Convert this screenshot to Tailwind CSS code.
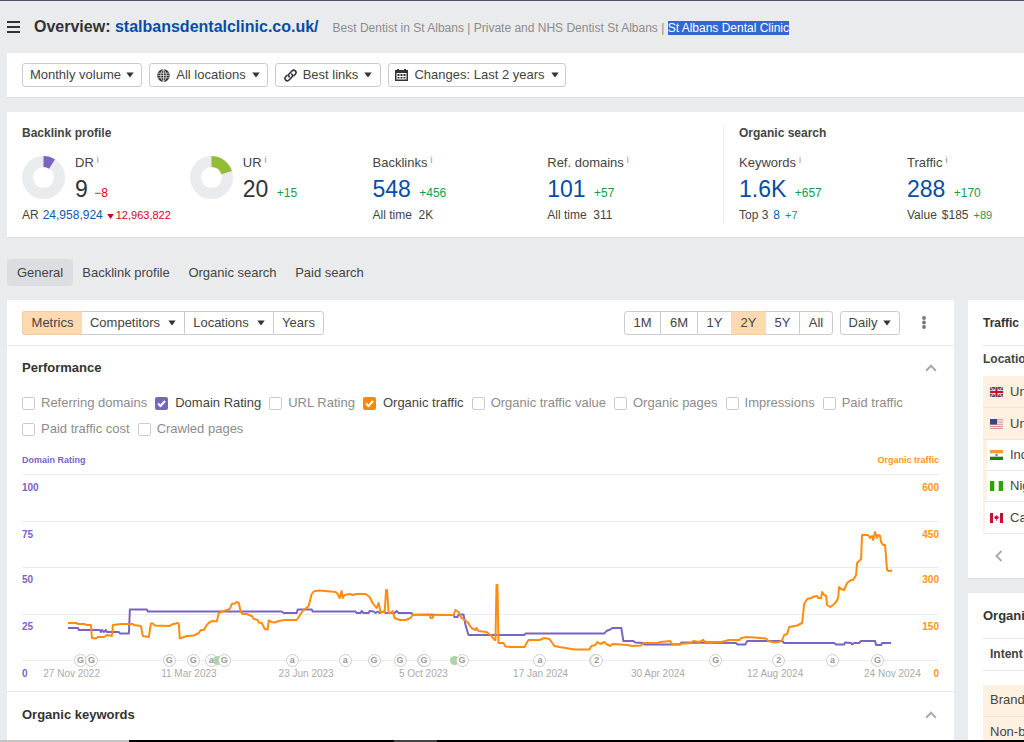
<!DOCTYPE html>
<html lang="en">
<head>
<meta charset="utf-8">
<meta name="viewport" content="width=device-width, initial-scale=1">
<title>Overview: stalbansdentalclinic.co.uk/</title>
<script src="https://cdn.jsdelivr.net/npm/@tailwindcss/browser@4"></script>
</head>
<body class="bg-[#eaebed] font-['Liberation_Sans',Arial,sans-serif] text-[13px] leading-5 text-[#444]">
<svg class="hidden">
  <symbol id="caret" viewBox="0 0 8 6"><path d="M0.300 0.500h7.400L4 5.500z" fill="#333"/></symbol>
  <symbol id="up" viewBox="0 0 12 8"><path d="M1.200 6.800 6 1.800l4.800 5" fill="none" stroke="#aaa" stroke-width="2"/></symbol>
</svg>
<div class="flex h-screen flex-col overflow-hidden border-t border-[#4b5273]">
  <header class="flex h-[52px] shrink-0 items-center pl-[7px] whitespace-nowrap">
    <button aria-label="Menu" class="mr-[14px]"><svg class="h-3 w-[13px]" viewBox="0 0 13 12"><path d="M0 1h13M0 6h13M0 11h13" stroke="#333" stroke-width="2"/></svg></button>
    <h1 class="text-base font-bold text-[#333]">Overview: <a href="#" class="text-[#054da7]">stalbansdentalclinic.co.uk/</a></h1>
    <p class="ml-[14px] pt-0.5 text-xs text-[#8c8c8c]">Best Dentist in St Albans | Private and NHS Dentist St Albans | <span class="bg-[#3367d1] text-white">St Albans Dental Clinic</span></p>
  </header>

  <section class="ml-[7px] flex h-[45px] shrink-0 items-center gap-[7px] border-b border-[#dedfe1] bg-white pl-[15px] whitespace-nowrap">
    <button class="flex h-6 w-[120px] items-center justify-center gap-[5px] rounded-[3px] border border-[#ccc]">Monthly volume<svg class="h-1.5 w-2"><use href="#caret"/></svg></button>
    <button class="flex h-6 w-[119px] items-center justify-center gap-1.5 rounded-[3px] border border-[#ccc]"><svg class="size-[13px]" viewBox="0 0 14 14"><circle cx="7" cy="7" r="6.800" fill="#333"/><path d="M0.800 4.500h12.400M0.800 9.500h12.400M7 .5v13M.5 7h13M7 .5C3 3 3 11 7 13.500M7 .5c4 2.500 4 10.500 0 13" fill="none" stroke="#fff" stroke-width=".7"/></svg>All locations<svg class="h-1.5 w-2"><use href="#caret"/></svg></button>
    <button class="flex h-6 w-[106px] items-center justify-center gap-1.5 rounded-[3px] border border-[#ccc]"><svg class="size-[13px]" viewBox="0 0 14 14" fill="none" stroke="#333" stroke-width="1.700" stroke-linecap="round"><path d="M5.700 8.600a2.500 2.500 0 0 1 0-3.500L8.600 2.100a2.500 2.500 0 0 1 3.600 3.500L10.700 7.100"/><path d="M8.300 5.400a2.500 2.500 0 0 1 0 3.500L5.400 11.900a2.500 2.500 0 0 1-3.600-3.500L3.300 6.900"/></svg>Best links<svg class="h-1.5 w-2"><use href="#caret"/></svg></button>
    <button class="flex h-6 w-[178px] items-center justify-center gap-1.5 rounded-[3px] border border-[#ccc]"><svg class="h-3 w-[13px]" viewBox="0 0 13 12"><path d="M0 1h2V0h2v1h5V0h2v1h2v11H0z" fill="#333"/><path d="M1.500 4h10v6.500h-10z" fill="#fff"/><path d="M2.500 5h2v2h-2zm3 0h2v2h-2zm3 0h2v2h-2zm-6 3h2v1.500h-2zm3 0h2v1.500h-2zm3 0h2v1.500h-2z" fill="#333"/></svg>Changes: Last 2 years<svg class="h-1.5 w-2"><use href="#caret"/></svg></button>
  </section>

  <section class="mt-3.5 ml-[7px] grid shrink-0 grid-cols-[702fr_300fr] border-b border-[#dedfe1] bg-white pt-3.5 pb-3.5 pl-[15px] whitespace-nowrap text-[13px]">
    <div class="border-r border-[#ececec]">
      <h2 class="pb-[13px] text-xs leading-[14px] font-bold">Backlink profile</h2>
      <div class="grid grid-cols-[168fr_183fr_175fr_176fr]">
        <div>
          <div class="flex h-[52px] gap-[10px]">
            <svg class="mt-[3px] size-[43px]" viewBox="-21.500 -21.500 43 43"><circle r="16" fill="none" stroke="#eaebed" stroke-width="11"/><path d="M0-21.500A21.500 21.500 0 0 1 11.500-18.160L5.600-8.860A10.500 10.500 0 0 0 0-10.500z" fill="#7865c3"/></svg>
            <div><div class="leading-5">DR<sup class="ml-[3px] text-[9px] text-[#888]">i</sup></div><div class="text-[23px] leading-8 text-[#333]">9 <span class="text-xs text-[#d0021b]">−8</span></div></div>
          </div>
          <div class="flex items-center pt-0.5 text-xs leading-4">AR<a href="#" class="ml-1 text-[#0f57ad]">24,958,924</a><svg class="mt-0.5 mr-0.5 ml-1 h-[5px] w-[7px]" viewBox="0 0 8 6"><path d="M0 0h8L4 6z" fill="#d0021b"/></svg><span class="text-[11px] text-[#d0021b]">12,963,822</span></div>
        </div>
        <div class="flex h-[52px] gap-[10px]">
          <svg class="mt-[3px] size-[43px]" viewBox="-21.500 -21.500 43 43"><circle r="16" fill="none" stroke="#eaebed" stroke-width="11"/><path d="M0-21.500A21.500 21.500 0 0 1 20.400-6.600L10-3.200A10.500 10.500 0 0 0 0-10.500z" fill="#90bd35"/></svg>
          <div><div class="leading-5">UR<sup class="ml-[3px] text-[9px] text-[#888]">i</sup></div><div class="text-[23px] leading-8 text-[#333]">20 <span class="ml-0.5 text-xs text-[#199a50]">+15</span></div></div>
        </div>
        <div><div>Backlinks<sup class="ml-[3px] text-[9px] text-[#888]">i</sup></div><div class="text-[23px] leading-8"><a href="#" class="text-[#054da7]">548</a> <span class="ml-0.5 text-xs text-[#199a50]">+456</span></div><div class="pt-0.5 text-xs leading-4">All time&nbsp; 2K</div></div>
        <div><div>Ref. domains<sup class="ml-[3px] text-[9px] text-[#888]">i</sup></div><div class="text-[23px] leading-8"><a href="#" class="text-[#054da7]">101</a> <span class="ml-0.5 text-xs text-[#199a50]">+57</span></div><div class="pt-0.5 text-xs leading-4">All time&nbsp; 311</div></div>
      </div>
    </div>
    <div class="pl-[15px]">
      <h2 class="pb-[13px] text-xs leading-[14px] font-bold">Organic search</h2>
      <div class="grid grid-cols-[168fr_117fr]">
        <div><div>Keywords<sup class="ml-[3px] text-[9px] text-[#888]">i</sup></div><div class="text-[23px] leading-8"><a href="#" class="text-[#054da7]">1.6K</a> <span class="ml-0.5 text-xs text-[#199a50]">+657</span></div><div class="flex gap-[5px] pt-0.5 text-xs leading-4"><span>Top 3</span><a href="#" class="text-[#0f57ad]">8</a><span class="text-[11px] text-[#199a50]">+7</span></div></div>
        <div><div>Traffic<sup class="ml-[3px] text-[9px] text-[#888]">i</sup></div><div class="text-[23px] leading-8"><a href="#" class="text-[#054da7]">288</a> <span class="ml-0.5 text-xs text-[#199a50]">+170</span></div><div class="flex gap-[5px] pt-0.5 text-xs leading-4"><span>Value</span><span>$185</span><span class="text-[11px] text-[#199a50]">+89</span></div></div>
      </div>
    </div>
  </section>

  <nav class="mt-[21px] ml-[7px] flex shrink-0 whitespace-nowrap">
    <a href="#" class="flex h-[27px] w-[66px] items-center justify-center rounded-sm bg-[#dcdde0]">General</a>
    <a href="#" class="flex h-[27px] w-[106px] items-center justify-center">Backlink profile</a>
    <a href="#" class="flex h-[27px] w-[107px] items-center justify-center">Organic search</a>
    <a href="#" class="flex h-[27px] w-[87px] items-center justify-center">Paid search</a>
  </nav>

  <div class="mt-3.5 flex min-h-0 flex-1 gap-3.5 overflow-hidden pl-[7px]">
    <main class="min-w-0 flex-1 bg-white">
      <div class="flex h-[46px] items-center border-b border-[#e8e8e8] pr-[22px] pl-[15px] whitespace-nowrap">
        <div class="flex h-6 rounded-[3px] border border-[#ccc]">
          <button class="-my-px -ml-px w-[60px] rounded-l-[3px] border border-r-0 border-[#f3cda4] bg-[#ffd9b0]">Metrics</button>
          <button class="flex w-[102px] items-center justify-center gap-2">Competitors<svg class="h-1.5 w-2"><use href="#caret"/></svg></button>
          <button class="flex w-[89px] items-center justify-center gap-2 border-l border-[#ccc]">Locations<svg class="h-1.5 w-2"><use href="#caret"/></svg></button>
          <button class="w-[50px] border-l border-[#ccc]">Years</button>
        </div>
        <div class="ml-auto flex h-6 rounded-[3px] border border-[#ccc]">
          <button class="w-[35px]">1M</button>
          <button class="w-[37px] border-l border-[#ccc]">6M</button>
          <button class="w-[34px] border-l border-[#ccc]">1Y</button>
          <button class="-my-px w-[35px] border-y border-[#f3cda4] bg-[#ffd9b0]">2Y</button>
          <button class="w-[33px]">5Y</button>
          <button class="w-[33px] border-l border-[#ccc]">All</button>
        </div>
        <button class="ml-[7px] flex h-6 w-[60px] items-center justify-center gap-1.5 rounded-[3px] border border-[#ccc]">Daily<svg class="h-1.5 w-2"><use href="#caret"/></svg></button>
        <button aria-label="More" class="ml-[19px]"><svg class="h-[13px] w-[13px]" viewBox="0 0 13 13" fill="#777"><circle cx="5" cy="2" r="1.900"/><circle cx="5" cy="6.500" r="1.900"/><circle cx="5" cy="11" r="1.900"/></svg></button>
      </div>

      <section class="border-b border-[#e8e8e8] px-[15px] pt-3">
        <div class="flex h-5 items-center justify-between"><h2 class="font-bold text-[#333]">Performance</h2><button aria-label="Collapse performance" class="mr-0.5"><svg class="h-2 w-3"><use href="#up"/></svg></button></div>
        <div class="mt-[15px] flex flex-wrap gap-x-2 gap-y-1.5 whitespace-nowrap text-[#8c8c8c]">
          <label class="flex items-center gap-1.5"><input type="checkbox" class="size-[13px] appearance-none rounded-[2px] border border-[#ccc]">Referring domains</label>
          <label class="flex items-center gap-[7px] text-[#444]"><span class="relative flex"><input type="checkbox" checked class="size-[13px] appearance-none rounded-[2px] bg-[#7865c3]"><svg class="pointer-events-none absolute inset-0 size-[13px]" viewBox="0 0 13 13"><path d="m3 6.500 2.500 2.500L10 4" fill="none" stroke="#fff" stroke-width="2"/></svg></span>Domain Rating</label>
          <label class="flex items-center gap-1.5"><input type="checkbox" class="size-[13px] appearance-none rounded-[2px] border border-[#ccc]">URL Rating</label>
          <label class="flex items-center gap-[7px] text-[#444]"><span class="relative flex"><input type="checkbox" checked class="size-[13px] appearance-none rounded-[2px] bg-[#ff8800]"><svg class="pointer-events-none absolute inset-0 size-[13px]" viewBox="0 0 13 13"><path d="m3 6.500 2.500 2.500L10 4" fill="none" stroke="#fff" stroke-width="2"/></svg></span>Organic traffic</label>
          <label class="flex items-center gap-1.5"><input type="checkbox" class="size-[13px] appearance-none rounded-[2px] border border-[#ccc]">Organic traffic value</label>
          <label class="flex items-center gap-1.5"><input type="checkbox" class="size-[13px] appearance-none rounded-[2px] border border-[#ccc]">Organic pages</label>
          <label class="flex items-center gap-1.5"><input type="checkbox" class="size-[13px] appearance-none rounded-[2px] border border-[#ccc]">Impressions</label>
          <label class="flex items-center gap-1.5"><input type="checkbox" class="size-[13px] appearance-none rounded-[2px] border border-[#ccc]">Paid traffic</label>
          <label class="flex items-center gap-1.5"><input type="checkbox" class="size-[13px] appearance-none rounded-[2px] border border-[#ccc]">Paid traffic cost</label>
          <label class="flex items-center gap-1.5"><input type="checkbox" class="size-[13px] appearance-none rounded-[2px] border border-[#ccc]">Crawled pages</label>
        </div>

        <div class="mt-3 flex h-[18px] items-center justify-between text-[9px] font-bold"><span class="text-[#7865c3]">Domain Rating</span><span class="text-[#ff9420]">Organic traffic</span></div>
        <div class="relative mt-[5px]">
          <div class="grid h-[186px] grid-rows-4 text-[10px] leading-3 font-bold text-[#ff9420]">
            <div class="flex justify-between border-t border-[#ececec] pt-[7px]"><span class="text-[#7865c3]">100</span><span>600</span></div>
            <div class="flex justify-between border-t border-[#ececec] pt-[7px]"><span class="text-[#7865c3]">75</span><span>450</span></div>
            <div class="flex justify-between border-t border-[#ececec] pt-1.5"><span class="text-[#7865c3]">50</span><span>300</span></div>
            <div class="flex justify-between border-t border-[#ececec] pt-1.5"><span class="text-[#7865c3]">25</span><span>150</span></div>
          </div>
          <div class="grid h-[31px] border-t border-[#ececec] pt-[7px] text-[10px] leading-3">
            <div class="col-start-1 row-start-1 flex justify-between font-bold text-[#ff9420]"><span class="text-[#7865c3]">0</span><span>0</span></div>
            <div class="col-start-1 row-start-1 -mr-3 -ml-[9px] grid grid-cols-8 text-center whitespace-nowrap text-[#aaa]"><span>27 Nov 2022</span><span>11 Mar 2023</span><span>23 Jun 2023</span><span>5 Oct 2023</span><span>17 Jan 2024</span><span>30 Apr 2024</span><span>12 Aug 2024</span><span>24 Nov 2024</span></div>
          </div>
          <svg class="absolute top-0 left-0 h-[186px] w-full" viewBox="22 474 918 186" preserveAspectRatio="none" fill="none" stroke-width="2" stroke-linejoin="round">
            <polyline stroke="#7865c3" points="68,628 78,628 79,630 100,630 101,632 102,630 104,632 106,630 107,632 119,632 120,633.500 129,633.500 130,609.500 147,609.500 148,611.500 282,611.500 284,613 297,613 298,609.500 312,609.500 313,611.500 356,611.500 357,613 361,613 362,611 364,613 369,613 370,611 374,611.500 376,613 378,611.500 380,613 384,611.500 386,613 395,613 397,611 399,613 412,613 413,614.500 454,615 455,617 458,617 459,614.500 464,614.500 466,625 469,635 525,635 526,633.500 605,633.500 607,631 611,629.500 613,628 622,628 624,641 634,641 636,642.500 644,643 645,644.500 681,644.500 682,642.500 737,643 738,644.500 746,644.500 748,641 783,641 785,643 835,643 837,644.500 845,644.500 846,642.500 852,643 853,644.500 855,643 860,643 862,641 876,641 877,645 882,645 883,643 892,643"/>
            <polyline stroke="#ff8c0f" points="68,623 77,623 78,624 85,624 86,625 91,625 92,638 96,638.500 98,637 104,637 107,635 112,636 113,625 117,624.500 122,624 133,624 134,625 141,626 143,636 149,637 151,623.500 153,623.500 155,625.500 170,626 172,624.500 178,623 179,624 180,638.500 187,636 194,635.500 199,633 201,630 204,630 207,625 210,622 213,621 217,621.500 219,613 224,611 230,609 232,604 235,603.500 237,602 239,603 241,612 243,614 247,614 252,616 254,619 258,620 259,622.500 262,623 265,629 268,629.500 269,620.500 272,622 275,622.500 279,621 285,620 297,620 299,617 303,611 309,606 312,594 314,591.500 319,590.500 326,591 331,591.500 336,592 338,594 340,598 342,591 343,598 345,595 350,594 353,595 357,594 366,594 370,597 373,603 377,608 379,603 381,612 385,612 386.500,590 387.500,590 389,613 391,613 393,611 395,618 400,620 406,620 411,618 413,615 430,614.500 431,618 433,618 434,615 454,615 456,610 459,612 462,618 468,622 472,628 476,630 477,628 479,631 487,632 491,635 495,640 496,640 497,585 498,585 499,643 504,643 506,646.500 512,647 525,647 529,640 540,640 545,638 550,639 555,646 560,647 566,648 575,649.500 590,649.500 592,646 596,645 598,642 601,644 605,642 607,644 611,646 613,644 628,645 633,646 642,645.500 644,643 659,643 661,642 671,641 673,644.500 692,643 694,641 700,642 704,640 706,642 722,642 730,640 740,640 742,638 748,637 767,638.500 769,641 775,642.500 780,642 783,640 785,635 788,634 790,627 798,625.500 803,623 805,604 808,599 812,598 815,596.500 818,596 819,598 822,598 823,592 825,595 827,596 828,605 831,607 834,605 837,602 839,598 840,587 842,589 845,590 848,583 852,580 854,580 857,575 858,563 862,559 863,535 869,535 871,538 873,536 874,540 876,532 878,538 879,535 881,536 882,542 884,545 886,545 888,570 890,571 893,570.500"/>
          </svg>
          <div id="events"></div>
        </div>
      </section>

      <section class="flex h-[46px] items-center justify-between pr-[17px] pl-[15px]"><h2 class="font-bold text-[#333]">Organic keywords</h2><button aria-label="Collapse organic keywords"><svg class="h-2 w-3"><use href="#up"/></svg></button></section>
    </main>

    <aside class="w-14 shrink-0 overflow-hidden whitespace-nowrap">
      <section class="h-[279px] overflow-hidden border-b border-[#dedfe1] bg-white pl-[15px]">
        <h2 class="flex h-[46px] items-center border-b border-[#e8e8e8] text-xs font-bold text-[#333]">Traffic</h2>
        <h3 class="h-[30px] pt-[5px] text-xs font-bold">Location</h3>
        <ul>
          <li class="flex h-8 items-center gap-[7px] border-b border-[#efe6dc] bg-[#fff1e2] pl-[7px]"><svg class="h-[10px] w-[13px] shrink-0" viewBox="0 0 13 10"><path d="M0 0h13v10H0z" fill="#22357e"/><path d="m0 0 13 10M13 0 0 10" stroke="#fff" stroke-width="1.600"/><path d="m0 0 13 10M13 0 0 10" stroke="#d0102a" stroke-width=".8"/><path d="M6.500 0v10M0 5h13" stroke="#fff" stroke-width="3.400"/><path d="M6.500 0v10M0 5h13" stroke="#d0102a" stroke-width="2.200"/></svg>United Kingdom</li>
          <li class="flex h-8 items-center gap-[7px] border-b border-[#efe6dc] bg-[#fff1e2] pl-[7px]"><svg class="h-[10px] w-[13px] shrink-0" viewBox="0 0 13 10"><path d="M0 0h13v10H0z" fill="#f9e9e6"/><path d="M0 .7h13M0 3h13M0 5.300h13M0 7.500h13M0 9.500h13" stroke="#d97985" stroke-width=".8"/><path d="M0 0h7v5.500H0z" fill="#34477e"/></svg>United States</li>
          <li class="flex h-[31px] items-center gap-[7px] border-b border-l-4 border-b-[#e8e8e8] border-l-[#fff1e2] pl-[3px]"><svg class="h-[10px] w-[13px] shrink-0" viewBox="0 0 13 10"><path d="M0 0h13v3.300H0z" fill="#ff9933"/><path d="M0 6.700h13V10H0z" fill="#138808"/><circle cx="6.500" cy="5" r="1.200" fill="#7777b8"/></svg>India</li>
          <li class="flex h-[31px] items-center gap-[7px] border-b border-l-4 border-b-[#e8e8e8] border-l-[#fff1e2] pl-[3px]"><svg class="h-[10px] w-[13px] shrink-0" viewBox="0 0 13 10"><path d="M0 0h4.300v10H0zM8.700 0H13v10H8.700z" fill="#2da300"/></svg>Nigeria</li>
          <li class="flex h-8 items-center gap-[7px] border-b border-l-2 border-b-[#e8e8e8] border-l-[#fff1e2] pl-[5px]"><svg class="h-[10px] w-[13px] shrink-0" viewBox="0 0 13 10"><path d="M0 0h3v10H0zM10 0h3v10h-3zM6.500 2l1 1.200 1.500.8-1.200 2-1 .3V8h-.6V6.300l-1-.3L4 4l1.500-.8z" fill="#c8102e"/></svg>Canada</li>
        </ul>
        <button aria-label="Previous" class="mt-4 ml-3 block"><svg class="h-3 w-2" viewBox="0 0 8 12"><path d="M6.500 1 1.500 6l5 5" fill="none" stroke="#aaa" stroke-width="2"/></svg></button>
      </section>
      <section class="mt-3.5 bg-white pl-[15px]">
        <h2 class="flex h-[46px] items-center border-b border-[#e8e8e8] text-[13px] font-bold text-[#333]">Organic</h2>
        <table class="w-full text-left">
          <thead><tr class="h-[31px] border-b border-[#e8e8e8]"><th scope="col" class="p-0 pl-[7px] text-xs">Intent</th></tr></thead>
          <tbody>
            <tr class="h-[15px]"><td class="p-0"></td></tr>
            <tr class="h-[31px] border-b border-[#efe6dc] bg-[#fff1e2]"><td class="p-0 pl-[7px]">Branded</td></tr>
            <tr class="h-[31px] bg-[#fff1e2]"><td class="p-0 pl-[7px]">Non-branded</td></tr>
          </tbody>
        </table>
      </section>
    </aside>
  </div>
  <div class="flex h-0.5 shrink-0 bg-black"><div class="w-[129px] bg-[#c4c4c4]"></div><div class="ml-[265px] w-[43px] bg-[#444]"></div></div>
</div>
<script>
  // Algorithm update markers along the time axis: [x on the 918-unit axis, label, tone]
  const events = [[58,'G'],[69,'G'],[147,'G'],[171,'G'],[189,'a'],[195,'','green'],[202,'G'],[270,'a'],[323,'a'],[352,'G'],[378,'G'],[401,'G'],[402,'G'],[432,'','green'],[440,'G'],[518,'a'],[574,'2'],[575,'2'],[694,'G'],[757,'2'],[811,'a'],[856,'G']];
  const plain = 'absolute top-[180px] -ml-1.5 flex size-[13px] items-center justify-center rounded-full border border-[#ccc] bg-white text-[9px] leading-none font-bold text-[#999]';
  const green = 'absolute top-[182px] -ml-1 size-[9px] rounded-full bg-[#a9d6a4]';
  for (const [x, label, tone] of events) {
    const dot = document.createElement('span');
    dot.className = tone ? green : plain;
    dot.textContent = label;
    dot.style.left = (x / 918 * 100) + '%';
    document.getElementById('events').append(dot);
  }
</script>
</body>
</html>
